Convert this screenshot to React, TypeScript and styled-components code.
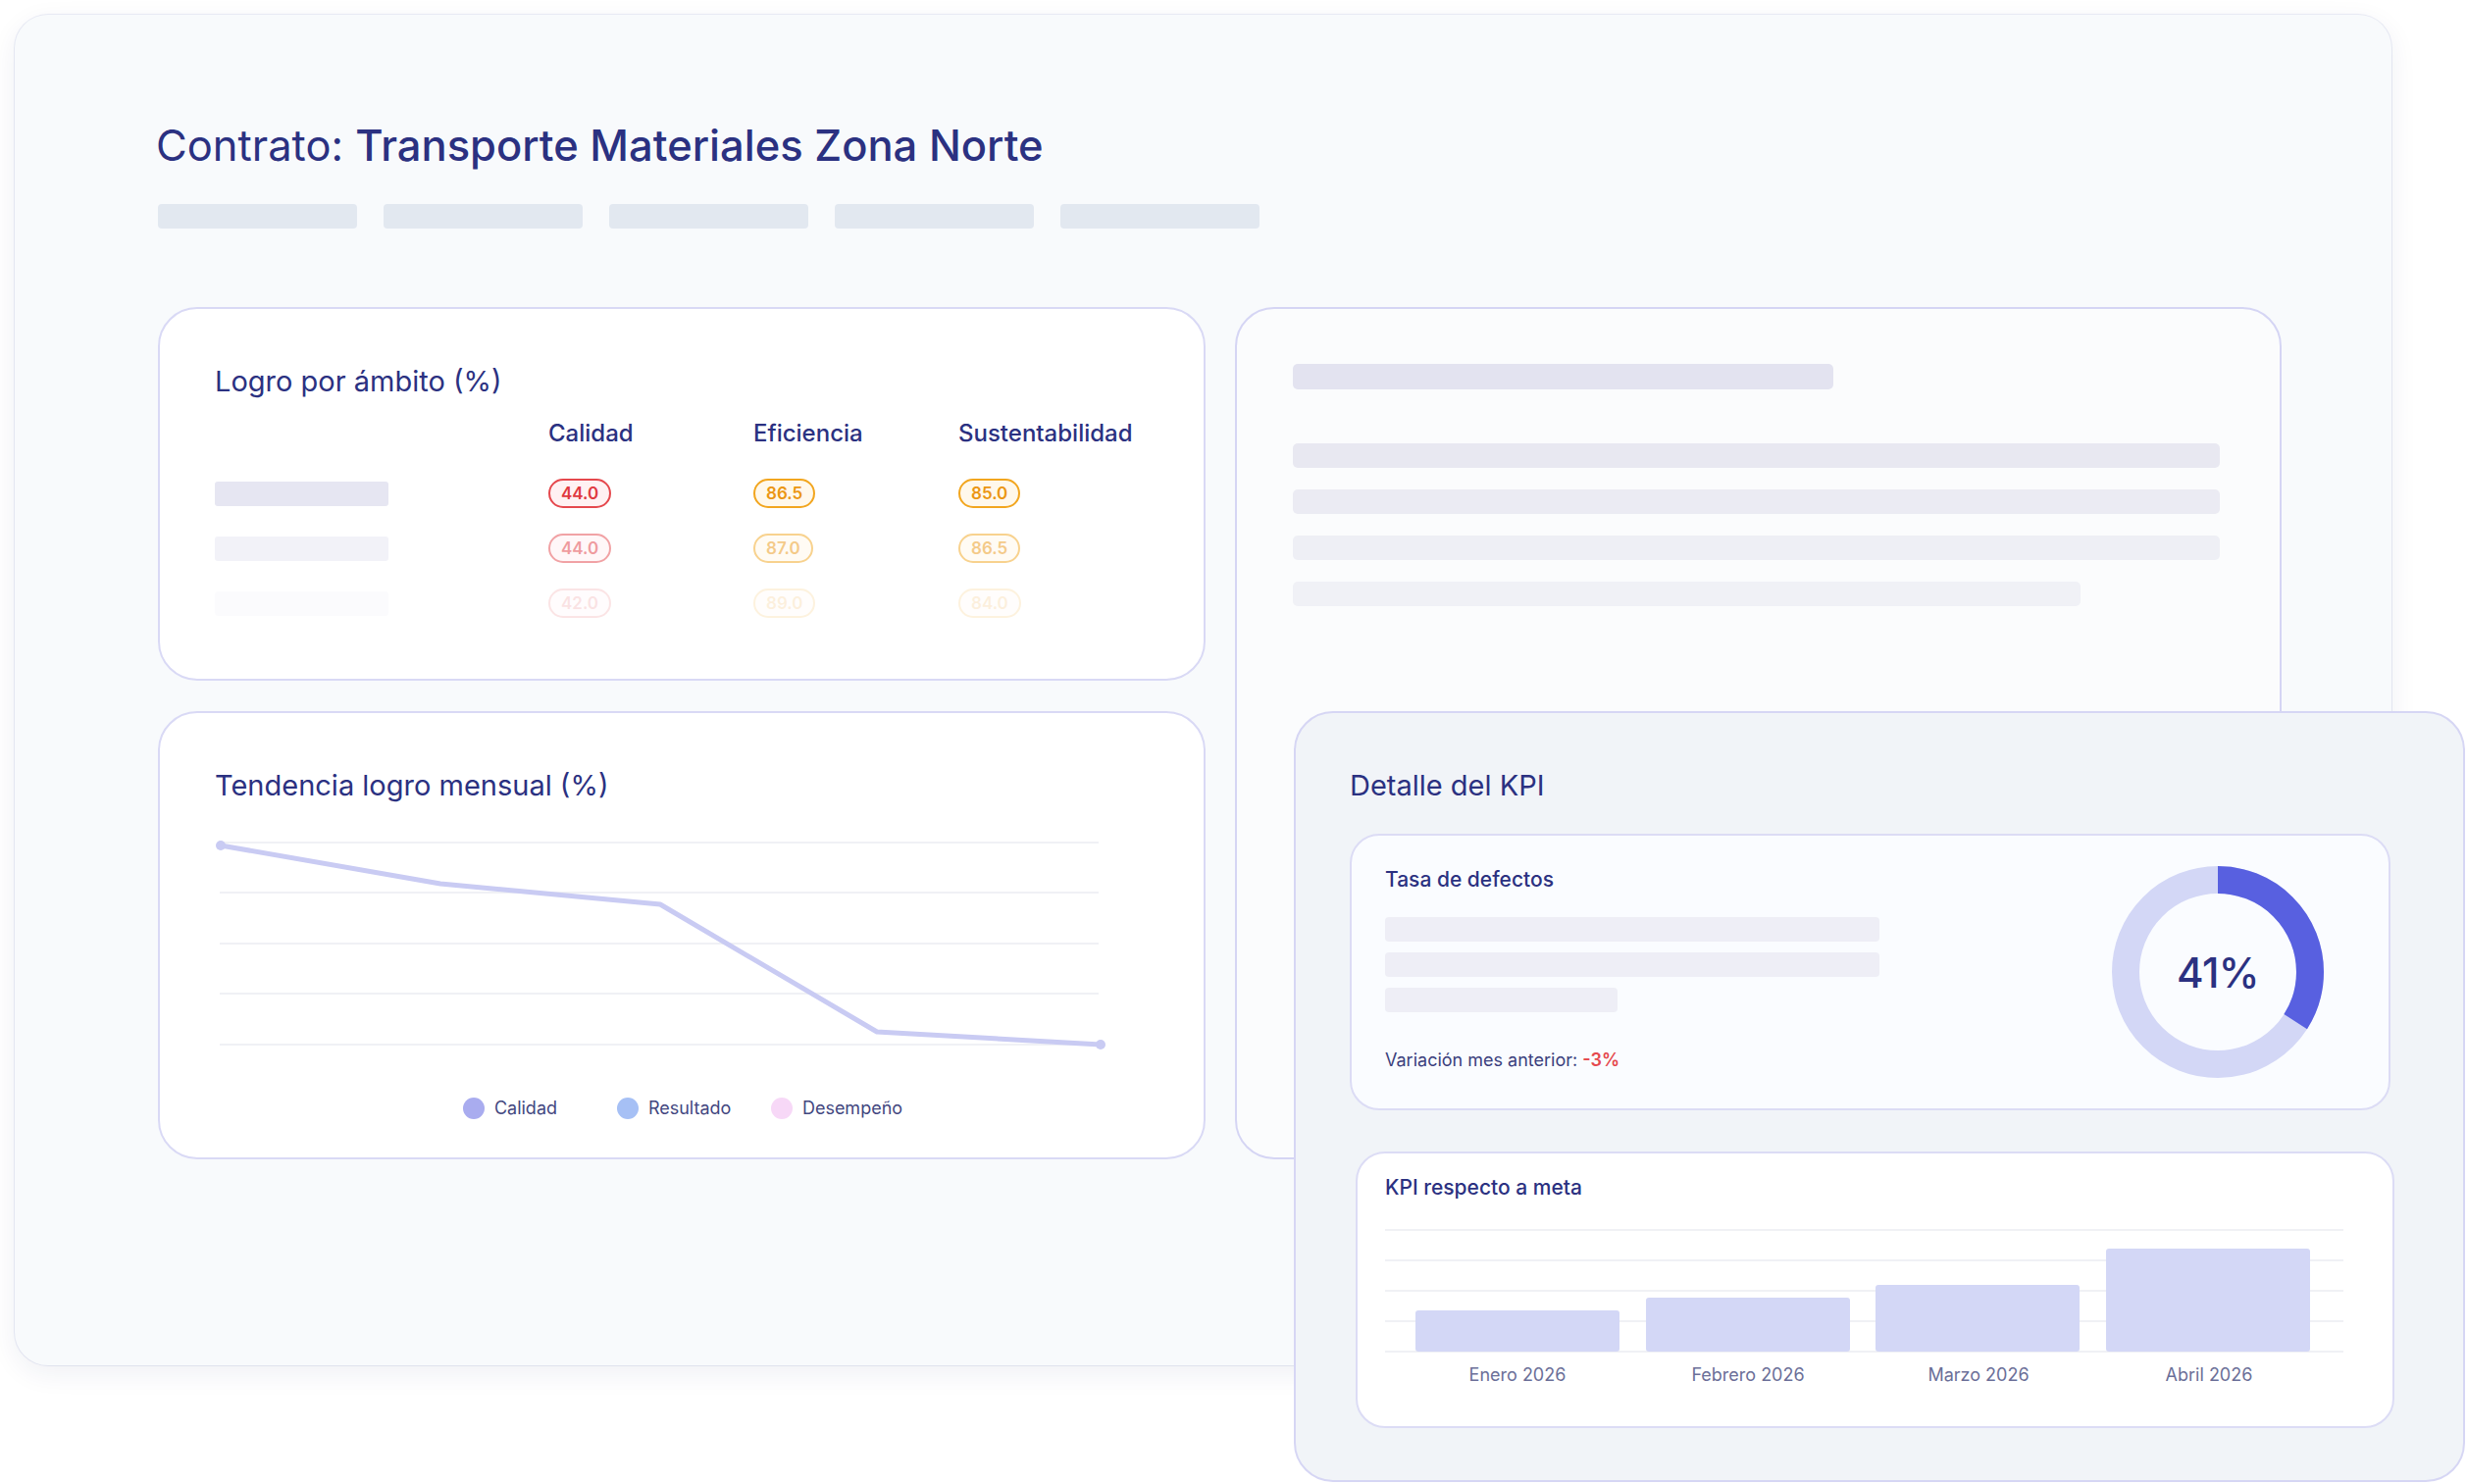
import React from "react";
import styled, { createGlobalStyle } from "styled-components";

const GlobalStyle = createGlobalStyle`
  html, body { margin: 0; padding: 0; background: #ffffff; }
  body { font-family: Inter, "Noto Sans", "Liberation Sans", sans-serif; -webkit-font-smoothing: antialiased; }
  * { box-sizing: border-box; }
`;

const NAVY = "#2b3181";

const Page = styled.div`
  position: relative;
  width: 2515px;
  height: 1513px;
  overflow: hidden;
  padding: 15px 0 0 15px;
  background: #ffffff;
`;

const Panel = styled.main`
  width: 2423px;
  height: 1377px;
  padding: 107px 0 0 146px;
  background: #f8fafc;
  border-radius: 34px;
  box-shadow: 0 8px 28px rgba(30, 41, 100, 0.07), 0 0 0 1px rgba(226, 230, 242, 0.7);
`;

const PageTitle = styled.h1`
  margin: 0 0 0 -2px;
  font-size: 43.5px;
  line-height: 52px;
  font-weight: 400;
  color: ${NAVY};
`;

const TitleStrong = styled.span`
  font-weight: 500;
`;

const Tabs = styled.div`
  display: flex;
  gap: 27px;
  margin-top: 34px;
`;

const TabSkeleton = styled.div`
  width: 203px;
  height: 25px;
  border-radius: 4px;
  background: #e2e8f0;
`;

const Grid = styled.div`
  display: grid;
  grid-template-columns: 1068px 1067px;
  grid-template-rows: 381px 457px;
  column-gap: 30px;
  row-gap: 31px;
  margin-top: 80px;
`;

const Card = styled.section<{ $span?: boolean; $ghost?: boolean }>`
  border: 2px solid ${(p) => (p.$ghost ? "#d5d5f4" : "#d9d9f5")};
  border-radius: 40px;
  background: ${(p) => (p.$ghost ? "#fbfcfd" : "#ffffff")};
  padding: 56px 54px 0 56px;
  grid-row: ${(p) => (p.$span ? "1 / span 2" : "auto")};
  grid-column: ${(p) => (p.$span ? "2" : "1")};
  ${(p) => (p.$ghost ? "padding-left: 57px;" : "")}
`;

const CardTitle = styled.h2`
  margin: 0;
  font-size: 29px;
  line-height: 35px;
  font-weight: 400;
  color: ${NAVY};
`;

const TableHead = styled.div`
  display: grid;
  grid-template-columns: 340px 209px 209px 1fr;
  margin-top: 21px;
  font-size: 24px;
  line-height: 29px;
  font-weight: 500;
  color: ${NAVY};
`;

const TableBody = styled.div`
  display: flex;
  flex-direction: column;
  gap: 26px;
  margin-top: 32px;
`;

const TableRow = styled.div<{ $fade: number }>`
  display: grid;
  grid-template-columns: 340px 209px 209px 1fr;
  align-items: center;
  height: 30px;
  opacity: ${(p) => p.$fade};
`;

const RowLabelSkeleton = styled.div`
  width: 177px;
  height: 25px;
  border-radius: 3px;
  background: #e6e6f2;
`;

const Badge = styled.span<{ $tone: "red" | "amber" }>`
  display: inline-flex;
  align-items: center;
  justify-content: center;
  justify-self: start;
  height: 30px;
  padding: 0 11px;
  border-radius: 16px;
  border: 2px solid ${(p) => (p.$tone === "red" ? "#e5484d" : "#f2a61f")};
  background: ${(p) => (p.$tone === "red" ? "#fff1f2" : "#fff8eb")};
  color: ${(p) => (p.$tone === "red" ? "#e0393f" : "#eb9612")};
  font-size: 17px;
  font-weight: 600;
`;

const LineChart = styled.svg`
  display: block;
  margin-top: 32px;
  overflow: visible;
`;

const Legend = styled.div`
  display: flex;
  justify-content: center;
  margin-top: 46px;
`;

const LegendItem = styled.div`
  display: flex;
  align-items: center;
  gap: 10px;
  width: 157px;
  font-size: 18px;
  line-height: 24px;
  color: #43477f;
  &:last-child { width: auto; }
`;

const LegendDot = styled.span<{ $color: string }>`
  width: 22px;
  height: 22px;
  border-radius: 50%;
  background: ${(p) => p.$color};
`;

const GhostTitle = styled.div`
  width: 551px;
  height: 26px;
  border-radius: 5px;
  background: #e3e3f0;
`;

const GhostLines = styled.div`
  display: flex;
  flex-direction: column;
  gap: 22px;
  margin-top: 55px;
`;

const GhostLine = styled.div<{ $w: number; $c: string }>`
  width: ${(p) => p.$w}px;
  height: 25px;
  border-radius: 5px;
  background: ${(p) => p.$c};
`;

const Overlay = styled.aside`
  position: absolute;
  left: 1319px;
  top: 725px;
  width: 1194px;
  height: 786px;
  background: #f1f4f8;
  border: 2px solid #d6d6f4;
  border-radius: 40px;
  padding: 56px 0 0 55px;
`;

const KpiCard = styled.div`
  display: flex;
  justify-content: space-between;
  align-items: flex-start;
  width: 1061px;
  height: 282px;
  margin-top: 32px;
  padding: 32px 66px 0 34px;
  border: 2px solid #dcdcf5;
  border-radius: 30px;
  background: #fafcff;
`;

const KpiInfo = styled.div`
  display: flex;
  flex-direction: column;
`;

const SubTitle = styled.h3`
  margin: 0;
  font-size: 21px;
  line-height: 25px;
  font-weight: 500;
  color: ${NAVY};
`;

const SkelStack = styled.div`
  display: flex;
  flex-direction: column;
  gap: 11px;
  margin-top: 26px;
`;

const SkelBar = styled.div<{ $w: number }>`
  width: ${(p) => p.$w}px;
  height: 25px;
  border-radius: 4px;
  background: #eeeef6;
`;

const Variation = styled.p`
  margin: 38px 0 0;
  font-size: 18px;
  line-height: 22px;
  color: #3b3f7d;
`;

const Negative = styled.span`
  color: #e5484d;
  font-weight: 600;
`;

const DonutWrap = styled.div`
  display: grid;
  place-items: center;
  align-self: center;
  width: 216px;
  height: 216px;
  margin-top: -32px;
  & > * { grid-area: 1 / 1; }
`;

const DonutValue = styled.span`
  font-size: 42px;
  font-weight: 500;
  color: ${NAVY};
  letter-spacing: -0.5px;
`;

const GoalCard = styled.div`
  width: 1059px;
  height: 282px;
  margin: 42px 0 0 6px;
  padding: 22px 0 0 28px;
  border: 2px solid #dcdcf5;
  border-radius: 30px;
  background: #ffffff;
`;

const BarChart = styled.svg`
  display: block;
  margin-top: 30px;
`;

const BarLabels = styled.div`
  display: grid;
  grid-template-columns: repeat(4, 208px);
  column-gap: 27px;
  padding-left: 31px;
  margin-top: 12px;
  font-size: 18px;
  line-height: 22px;
  color: #6b6f98;
  text-align: center;
`;

const rows = [
  { fade: 1, vals: ["44.0", "86.5", "85.0"] },
  { fade: 0.5, vals: ["44.0", "87.0", "86.5"] },
  { fade: 0.14, vals: ["42.0", "89.0", "84.0"] },
];

const linePts: [number, number][] = [
  [6, 12],
  [230, 51],
  [454, 72],
  [675, 202],
  [903, 215],
];

const bars = [
  { x: 31, top: 83, label: "Enero 2026" },
  { x: 266, top: 70, label: "Febrero 2026" },
  { x: 500, top: 57, label: "Marzo 2026" },
  { x: 735, top: 20, label: "Abril 2026" },
];

function Donut() {
  const r = 94;
  const c = 2 * Math.PI * r;
  const frac = 0.34;
  return (
    <DonutWrap>
      <svg width="216" height="216" viewBox="0 0 216 216">
        <circle cx="108" cy="108" r={r} fill="none" stroke="#d3d7f6" strokeWidth="28" />
        <circle
          cx="108"
          cy="108"
          r={r}
          fill="none"
          stroke="#5860e0"
          strokeWidth="28"
          strokeDasharray={`${c * frac} ${c}`}
          transform="rotate(-90 108 108)"
        />
      </svg>
      <DonutValue>41%</DonutValue>
    </DonutWrap>
  );
}

export default function App() {
  return (
    <>
      <GlobalStyle />
      <Page>
        <Panel>
          <PageTitle>
            Contrato: <TitleStrong>Transporte Materiales Zona Norte</TitleStrong>
          </PageTitle>
          <Tabs>
            {[0, 1, 2, 3, 4].map((i) => (
              <TabSkeleton key={i} />
            ))}
          </Tabs>
          <Grid>
            <Card>
              <CardTitle>Logro por ámbito (%)</CardTitle>
              <TableHead>
                <span />
                <span>Calidad</span>
                <span>Eficiencia</span>
                <span>Sustentabilidad</span>
              </TableHead>
              <TableBody>
                {rows.map((r, i) => (
                  <TableRow key={i} $fade={r.fade}>
                    <RowLabelSkeleton />
                    <Badge $tone="red">{r.vals[0]}</Badge>
                    <Badge $tone="amber">{r.vals[1]}</Badge>
                    <Badge $tone="amber">{r.vals[2]}</Badge>
                  </TableRow>
                ))}
              </TableBody>
            </Card>

            <Card $span $ghost>
              <GhostTitle />
              <GhostLines>
                <GhostLine $w={945} $c="#e8e8f1" />
                <GhostLine $w={945} $c="#ebebf3" />
                <GhostLine $w={945} $c="#eeeff5" />
                <GhostLine $w={803} $c="#f0f1f6" />
              </GhostLines>
            </Card>

            <Card>
              <CardTitle>Tendencia logro mensual (%)</CardTitle>
              <LineChart width="910" height="222" viewBox="0 0 910 222">
                {[9, 60, 112, 163, 215].map((y) => (
                  <line key={y} x1="5" x2="901" y1={y} y2={y} stroke="#f0f1f5" strokeWidth="2" />
                ))}
                <polyline
                  points={linePts.map((p) => p.join(",")).join(" ")}
                  fill="none"
                  stroke="#c9cbf3"
                  strokeWidth="5"
                  strokeLinejoin="round"
                  strokeLinecap="round"
                />
                <circle cx={linePts[0][0]} cy={linePts[0][1]} r="5" fill="#c9cbf3" />
                <circle cx={linePts[4][0]} cy={linePts[4][1]} r="5" fill="#c9cbf3" />
              </LineChart>
              <Legend>
                <LegendItem>
                  <LegendDot $color="#a9acef" />
                  Calidad
                </LegendItem>
                <LegendItem>
                  <LegendDot $color="#a6c0f5" />
                  Resultado
                </LegendItem>
                <LegendItem>
                  <LegendDot $color="#f7d8f7" />
                  Desempeño
                </LegendItem>
              </Legend>
            </Card>
          </Grid>
        </Panel>

        <Overlay>
          <CardTitle>Detalle del KPI</CardTitle>
          <KpiCard>
            <KpiInfo>
              <SubTitle>Tasa de defectos</SubTitle>
              <SkelStack>
                <SkelBar $w={504} />
                <SkelBar $w={504} />
                <SkelBar $w={237} />
              </SkelStack>
              <Variation>
                Variación mes anterior: <Negative>-3%</Negative>
              </Variation>
            </KpiInfo>
            <Donut />
          </KpiCard>
          <GoalCard>
            <SubTitle>KPI respecto a meta</SubTitle>
            <BarChart width="977" height="126" viewBox="0 0 977 126">
              {[1, 32, 63, 94, 125].map((y) => (
                <line key={y} x1="0" x2="977" y1={y} y2={y} stroke="#f0f1f5" strokeWidth="2" />
              ))}
              {bars.map((b) => (
                <rect key={b.label} x={b.x} y={b.top} width="208" height={125 - b.top} rx="3" fill="#d3d7f6" />
              ))}
            </BarChart>
            <BarLabels>
              {bars.map((b) => (
                <span key={b.label}>{b.label}</span>
              ))}
            </BarLabels>
          </GoalCard>
        </Overlay>
      </Page>
    </>
  );
}
